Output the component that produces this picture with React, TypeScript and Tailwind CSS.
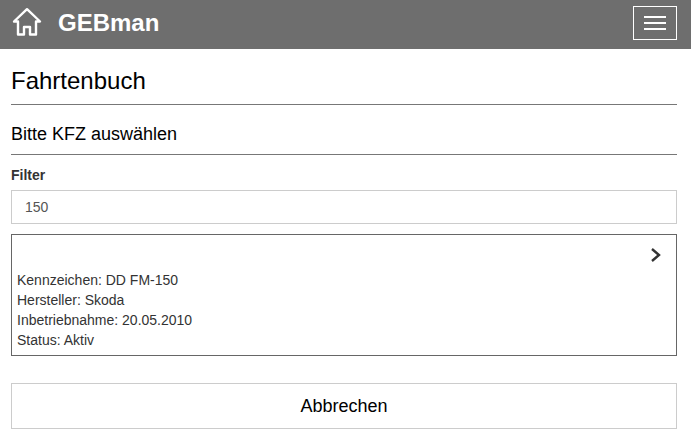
import React from 'react';

export default function App() {
    return (
        <div className="min-h-[439px] bg-white font-['Liberation_Sans',Arial,sans-serif] text-[#333]">
            <header className="h-[49px] bg-[#6e6e6e] flex justify-between pl-[12px] pr-[14px] pt-[6px]">
                <div className="flex items-start">
                    <svg className="mt-[1px]" width="30" height="30" viewBox="0 0 30 30" fill="none" stroke="white" strokeWidth="2.4" strokeLinejoin="round" strokeLinecap="round">
                        <path d="M2 14.5 15 2.2 28 14.5 24 14.5 24 27.5 18 27.5 18 20 12 20 12 27.5 6 27.5 6 14.5Z" />
                    </svg>
                    <span className="ml-[16px] text-[24px] leading-[33px] font-bold text-white">GEBman</span>
                </div>
                <button className="w-[44px] h-[34px] border border-white flex flex-col items-center justify-center gap-[4px]">
                    <span className="block w-[22px] h-[2px] bg-white" />
                    <span className="block w-[22px] h-[2px] bg-white" />
                    <span className="block w-[22px] h-[2px] bg-white" />
                </button>
            </header>

            <main className="pl-[11px] pr-[14px]">
                <h1 className="pt-[17px] pb-[9px] text-[24px] leading-[29px] text-[#000] border-b border-[#777]">Fahrtenbuch</h1>
                <h2 className="pt-[19px] pb-[9px] text-[18px] leading-[21px] text-[#000] border-b border-[#777]">Bitte KFZ auswählen</h2>

                <label className="block mt-[12px] text-[14px] leading-[16px] font-bold">Filter</label>
                <input
                    defaultValue="150"
                    className="block mt-[7px] w-full h-[34px] px-[13px] text-[14px] text-[#555] border border-[#ccc] outline-none"
                />

                <div className="relative mt-[10px] h-[122px] border border-[#666] px-[5px] pt-[35px] text-[14px] leading-[20px]">
                    <svg className="absolute right-[14px] top-[12px]" width="12" height="16" viewBox="0 0 12 16" fill="none" stroke="#333" strokeWidth="2.4">
                        <path d="M2 2 9 8 2 14" />
                    </svg>
                    <div>Kennzeichen: DD FM-150</div>
                    <div>Hersteller: Skoda</div>
                    <div>Inbetriebnahme: 20.05.2010</div>
                    <div>Status: Aktiv</div>
                </div>

                <button className="block mt-[27px] w-full h-[46px] border border-[#ccc] bg-white text-[18px] text-[#000]">Abbrechen</button>
            </main>
        </div>
    );
}
